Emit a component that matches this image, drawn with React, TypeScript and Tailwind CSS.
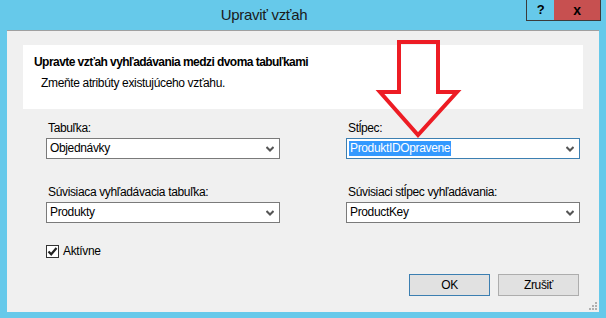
import React from "react";

const font = { fontFamily: '"Liberation Sans", Arial, sans-serif' };

function Chevron() {
  return (
    <svg width="8" height="6" viewBox="0 0 8 6" className="shrink-0">
      <path d="M0.5 1 L4 4.5 L7.5 1" fill="none" stroke="#555" strokeWidth="2" />
    </svg>
  );
}

function Combo({ value, focused }: { value: string; focused?: boolean }) {
  return (
    <div
      className={`flex h-[21px] items-center justify-between bg-white pl-[2px] pr-[5px] border ${
        focused ? "border-[#3c7fb1]" : "border-[#7a7a7a]"
      }`}
    >
      {focused ? (
        <span className="bg-[#3399ff] px-[1px] text-white leading-[15px]">{value}</span>
      ) : (
        <span className="px-[1px] leading-[15px]">{value}</span>
      )}
      <Chevron />
    </div>
  );
}

function Field({ label, value, focused }: { label: string; value: string; focused?: boolean }) {
  return (
    <div className="flex flex-col gap-[3px]">
      <div className="pl-[2px] leading-[14px]">{label}</div>
      <Combo value={value} focused={focused} />
    </div>
  );
}

export default function App() {
  return (
    <div
      className="relative flex h-[318px] w-[606px] flex-col overflow-hidden bg-[#66c9ea] text-[12px] tracking-[-0.35px] text-black"
      style={font}
    >
      {/* title bar */}
      <div className="flex h-[30px] shrink-0 items-start">
        <div className="flex h-[30px] flex-1 items-center justify-center pl-[2px] text-[15px] tracking-[-0.3px] text-[#1a1a1a]">
          Upraviť vzťah
        </div>
        <div className="flex h-[21px] pr-[5px]">
          <div className="flex w-[28px] items-center justify-center border-b border-l border-[#3b3b3b] bg-[#66c9ea] text-[13px] font-bold">
            ?
          </div>
          <div className="flex w-[47px] items-center justify-center border-b border-r border-[#3b3b3b] bg-[#c75050] text-[14px] font-bold">
            x
          </div>
        </div>
      </div>

      {/* dialog body */}
      <div className="mx-[7px] mb-[6px] flex flex-1 flex-col border-t border-[#a0a0a0] bg-[#f0f0f0]">
        <div className="mx-[16px] mt-[14px] flex h-[64px] flex-col bg-white pl-[11px] pt-[10px]">
          <div className="text-[12px] font-bold leading-[14px] tracking-[-0.55px]">
            Upravte vzťah vyhľadávania medzi dvoma tabuľkami
          </div>
          <div className="mt-[7px] pl-[7px] leading-[14px]">Zmeňte atribúty existujúceho vzťahu.</div>
        </div>

        <div className="mt-[12px] grid grid-cols-[234px_234px] gap-x-[66px] gap-y-[26px] pl-[39px]">
          <Field label="Tabuľka:" value="Objednávky" />
          <Field label="Stĺpec:" value="ProduktIDOpravene" focused />
          <Field label="Súvisiaca vyhľadávacia tabuľka:" value="Produkty" />
          <Field label="Súvisiaci stĺpec vyhľadávania:" value="ProductKey" />
        </div>

        <div className="mt-[21px] flex items-center gap-[4px] pl-[39px]">
          <div className="flex h-[13px] w-[13px] items-center justify-center border border-[#333] bg-white">
            <svg width="11" height="11" viewBox="0 0 11 11">
              <path d="M1.5 5.5 L4.2 8.3 L9.5 2" fill="none" stroke="#222" strokeWidth="2.2" />
            </svg>
          </div>
          <span className="leading-[14px]">Aktívne</span>
        </div>

        <div className="mt-[16px] flex justify-end gap-[8px] pr-[20px]">
          <button className="h-[22px] w-[81px] border border-[#3c7fb1] bg-[#e1e1e1] text-[12px]">OK</button>
          <button className="h-[22px] w-[81px] border border-[#adadad] bg-[#e1e1e1] text-[12px]">Zrušiť</button>
        </div>

        <div className="mt-auto flex justify-end pb-[1px] pr-[1px]">
          <svg width="10" height="10" viewBox="0 0 10 10">
            <g fill="#b0b0b0">
              <rect x="7" y="1" width="2" height="2" />
              <rect x="4" y="4" width="2" height="2" />
              <rect x="7" y="4" width="2" height="2" />
              <rect x="1" y="7" width="2" height="2" />
              <rect x="4" y="7" width="2" height="2" />
              <rect x="7" y="7" width="2" height="2" />
            </g>
          </svg>
        </div>
      </div>

      {/* red annotation arrow */}
      <svg
        className="pointer-events-none absolute left-[370px] top-[30px]"
        width="100"
        height="112"
        viewBox="0 0 100 112"
      >
        <path
          d="M29 12 L68 12 L68 62 L87 62 L48 105 L10 62 L29 62 Z"
          fill="none"
          stroke="#ed1c24"
          strokeWidth="4"
          strokeLinejoin="miter"
        />
      </svg>
    </div>
  );
}
